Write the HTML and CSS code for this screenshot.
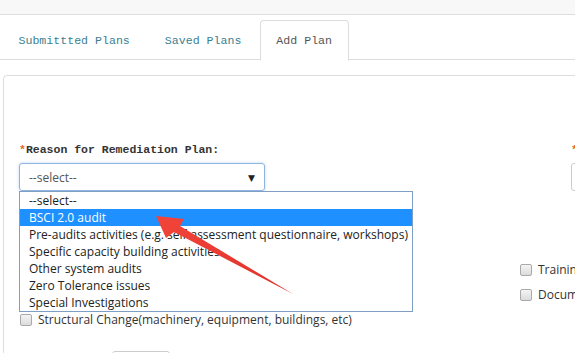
FILE: index.html
```html
<!DOCTYPE html>
<html lang="en">
<head>
  <meta charset="UTF-8" />
  <title>Remediation Plans</title>
  <link rel="stylesheet" href="styles.css">
</head>
<body>
  <div class="topbar"></div>

  <ul class="tabs">
    <li class="tab">Submittted Plans</li>
    <li class="tab">Saved Plans</li>
    <li class="tab active">Add Plan</li>
  </ul>

  <div class="panel">
    <div class="form-col">
      <label class="field-label"><span class="req">*</span>Reason for Remediation Plan:</label>
      <div class="select-wrap">
        <div class="select">
          <span>--select--</span>
          <span class="caret">&#9660;</span>
        </div>
        <ul class="listbox">
          <li>--select--</li>
          <li class="picked">BSCI 2.0 audit</li>
          <li>Pre-audits activities (e.g. self-assessment questionnaire, workshops)</li>
          <li>Specific capacity building activities</li>
          <li>Other system audits</li>
          <li>Zero Tolerance issues</li>
          <li>Special Investigations</li>
        </ul>
      </div>

      <div class="checks">
        <div class="check empty"></div>
        <div class="check"><span class="box"></span>Training and awareness</div>
        <div class="check empty"></div>
        <div class="check"><span class="box"></span>Documentation and records</div>
        <div class="check"><span class="box"></span>Structural Change(machinery, equipment, buildings, etc)</div>
      </div>

      <div class="actions">
        <button class="btn">Save</button>
      </div>
    </div>

    <div class="form-col side">
      <label class="field-label"><span class="req">*</span>Deadline:</label>
      <div class="input"></div>
    </div>
  </div>

  <svg class="arrow" width="575" height="353" viewBox="0 0 575 353">
    <defs>
      <linearGradient id="arrowFill" x1="0" y1="0" x2="1" y2="1">
        <stop offset="0" stop-color="#f2453a" />
        <stop offset="1" stop-color="#e0302a" />
      </linearGradient>
    </defs>
    <polygon points="156,216 184,219 180,226 293,294 174,232 166,238" fill="url(#arrowFill)" />
  </svg>
</body>
</html>
```

FILE: styles.css
```css
* {
  box-sizing: border-box;
}

body {
  margin: 0;
  font-family: 'Open Sans', 'DejaVu Sans', sans-serif;
  font-size: 12px;
  color: #333;
  background: #fff;
  overflow: hidden;
  position: relative;
  height: 353px;
}

.topbar {
  height: 15px;
  background: #f8f8f8;
  border-bottom: 1px solid #dedede;
}

.tabs {
  list-style: none;
  margin: 5px 0 0;
  padding: 0 0 0 2px;
  display: flex;
  border-bottom: 1px solid #ddd;
  height: 40px;
}

.tab {
  font-family: 'Liberation Mono', monospace;
  font-size: 11.6px;
  color: #3b7f90;
  padding: 0 15.5px;
  margin-right: 2px;
  height: 40px;
  line-height: 40px;
  border: 1px solid transparent;
  border-radius: 4px 4px 0 0;
}

.tab.active {
  color: #555;
  background: #fff;
  border-color: #ddd;
  border-bottom-color: #fff;
  height: 41px;
}

.panel {
  margin: 15px -20px 0 3px;
  border: 1px solid #ddd;
  border-radius: 4px;
  padding: 66px 0 0 15px;
  display: grid;
  grid-template-columns: 552px 1fr;
  height: 320px;
}

.field-label {
  display: block;
  font-family: 'Liberation Mono', monospace;
  font-weight: bold;
  font-size: 11.5px;
  color: #333;
  height: 16px;
  line-height: 16px;
}

.req {
  color: #e2691f;
}

.select-wrap {
  position: relative;
  margin-top: 5px;
}

.select {
  width: 246px;
  height: 28px;
  border: 1px solid #8fb4e2;
  border-radius: 3px;
  box-shadow: 0 0 3px rgba(102, 160, 230, 0.45);
  display: flex;
  align-items: center;
  justify-content: space-between;
  padding: 0 9px 0 9px;
  color: #555;
}

.caret {
  font-size: 9px;
  color: #222;
}

.listbox {
  position: absolute;
  top: 28px;
  left: 0;
  z-index: 2;
  width: 394px;
  margin: 0;
  padding: 0;
  list-style: none;
  background: #fff;
  border: 1px solid #7f9ec4;
}

.listbox li {
  height: 17px;
  line-height: 17px;
  padding-left: 9px;
  color: #222;
  white-space: nowrap;
}

.listbox li.picked {
  background: #1e90ff;
  color: #fff;
}

.checks {
  display: grid;
  grid-template-columns: 500px 1fr;
  grid-template-rows: repeat(3, 25px);
  margin-top: 66px;
}

.check {
  display: flex;
  align-items: center;
  gap: 6px;
  height: 25px;
  white-space: nowrap;
}

.check:nth-child(1) { grid-column: 1; grid-row: 1; }
.check:nth-child(2) { grid-column: 2; grid-row: 1; }
.check:nth-child(3) { grid-column: 1; grid-row: 2; }
.check:nth-child(4) { grid-column: 2; grid-row: 2; }
.check:nth-child(5) { grid-column: 1; grid-row: 3; }

.box {
  width: 12px;
  height: 12px;
  margin-left: 1px;
  border: 1px solid #a9a9a9;
  border-radius: 2px;
  background: linear-gradient(#f4f4f4, #dcdcdc);
}

.actions {
  margin: 19px 0 0 93px;
}

.btn {
  font-family: inherit;
  font-size: 12px;
  width: 58px;
  height: 30px;
  border: 1px solid #ccc;
  border-radius: 3px;
  background: #fff;
  color: #333;
}

.input {
  margin-top: 5px;
  width: 200px;
  height: 28px;
  border: 1px solid #ccc;
  border-radius: 3px;
}

.arrow {
  position: absolute;
  top: 0;
  left: 0;
  z-index: 5;
  pointer-events: none;
}
```
